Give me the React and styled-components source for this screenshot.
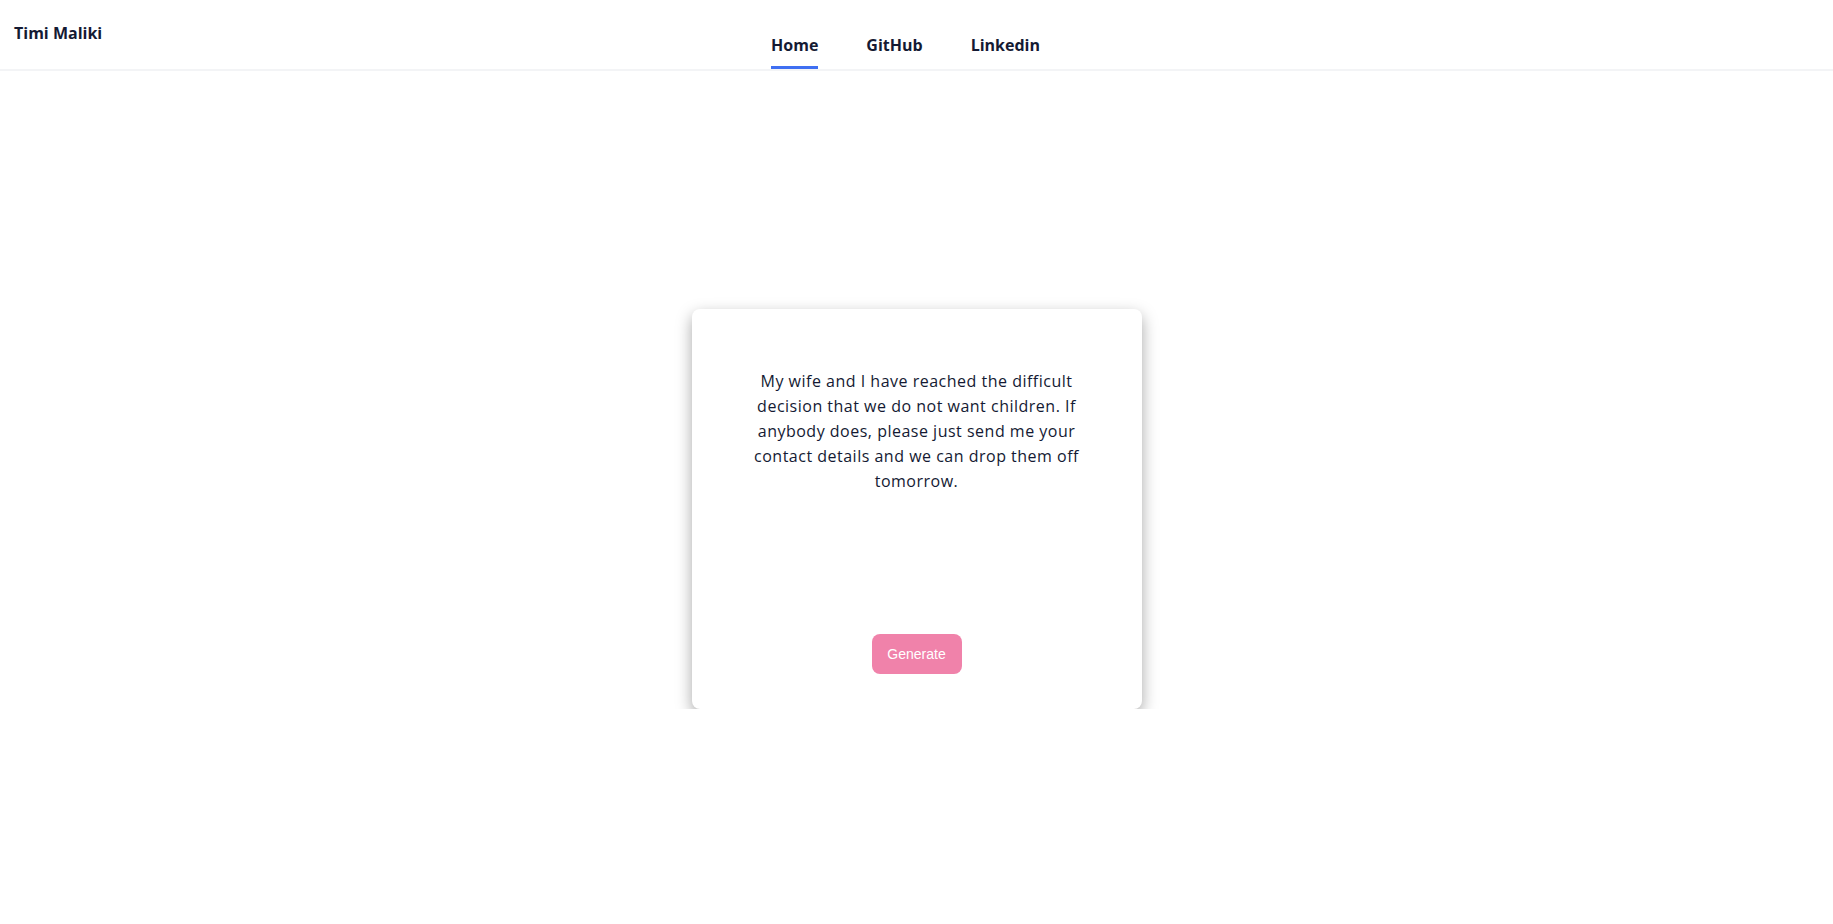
import React, { useState } from 'react';
import styled, { createGlobalStyle } from 'styled-components';

const GlobalStyle = createGlobalStyle`
  html, body {
    margin: 0;
    padding: 0;
    background: #ffffff;
  }
  body {
    font-family: 'Open Sans', 'Noto Sans', sans-serif;
    color: #141a33;
  }
  * {
    box-sizing: border-box;
  }
`;

const Header = styled.header`
  display: flex;
  align-items: stretch;
  height: 71px;
  padding: 0 126px 0 14px;
  border-bottom: 2px solid #f3f4f6;
`;

const Logo = styled.div`
  width: 90px;
  padding-top: 22px;
  font-size: 16px;
  font-weight: 700;
  color: #141a33;
  white-space: nowrap;
`;

const Nav = styled.nav`
  display: flex;
  gap: 48px;
  margin: 0 auto;
  align-items: flex-end;
`;

const NavLink = styled.a`
  display: block;
  padding-bottom: 10px;
  font-size: 16px;
  font-weight: 700;
  color: #141a33;
  text-decoration: none;
  cursor: pointer;
  border-bottom: 3px solid ${props => (props.active ? '#3f6ff2' : 'transparent')};
`;

const Main = styled.main`
  display: flex;
  justify-content: center;
  padding-top: 238px;
`;

const Card = styled.div`
  width: 450px;
  height: 400px;
  display: flex;
  flex-direction: column;
  align-items: center;
  padding: 60px 50px 35px;
  background: #ffffff;
  border-radius: 8px;
  box-shadow: 0 6px 16px rgba(0, 0, 0, 0.35);
`;

const Joke = styled.p`
  margin: 0;
  max-width: 345px;
  text-align: center;
  font-size: 16px;
  letter-spacing: 0.5px;
  line-height: 25px;
  color: #141a33;
`;

const GenerateButton = styled.button`
  margin-top: auto;
  width: 90px;
  height: 40px;
  border: none;
  border-radius: 8px;
  background: #f082aa;
  color: #ffffff;
  font-family: 'Liberation Sans', Arial, sans-serif;
  font-size: 14px;
  cursor: pointer;
`;

const jokes = [
  'My wife and I have reached the difficult decision that we do not want children. If anybody does, please just send me your contact details and we can drop them off tomorrow.',
];

function App() {
  const [index, setIndex] = useState(0);

  return (
    <>
      <GlobalStyle />
      <Header>
        <Logo>Timi Maliki</Logo>
        <Nav>
          <NavLink active>Home</NavLink>
          <NavLink>GitHub</NavLink>
          <NavLink>Linkedin</NavLink>
        </Nav>
      </Header>
      <Main>
        <Card>
          <Joke>{jokes[index]}</Joke>
          <GenerateButton onClick={() => setIndex((index + 1) % jokes.length)}>
            Generate
          </GenerateButton>
        </Card>
      </Main>
    </>
  );
}

export default App;
